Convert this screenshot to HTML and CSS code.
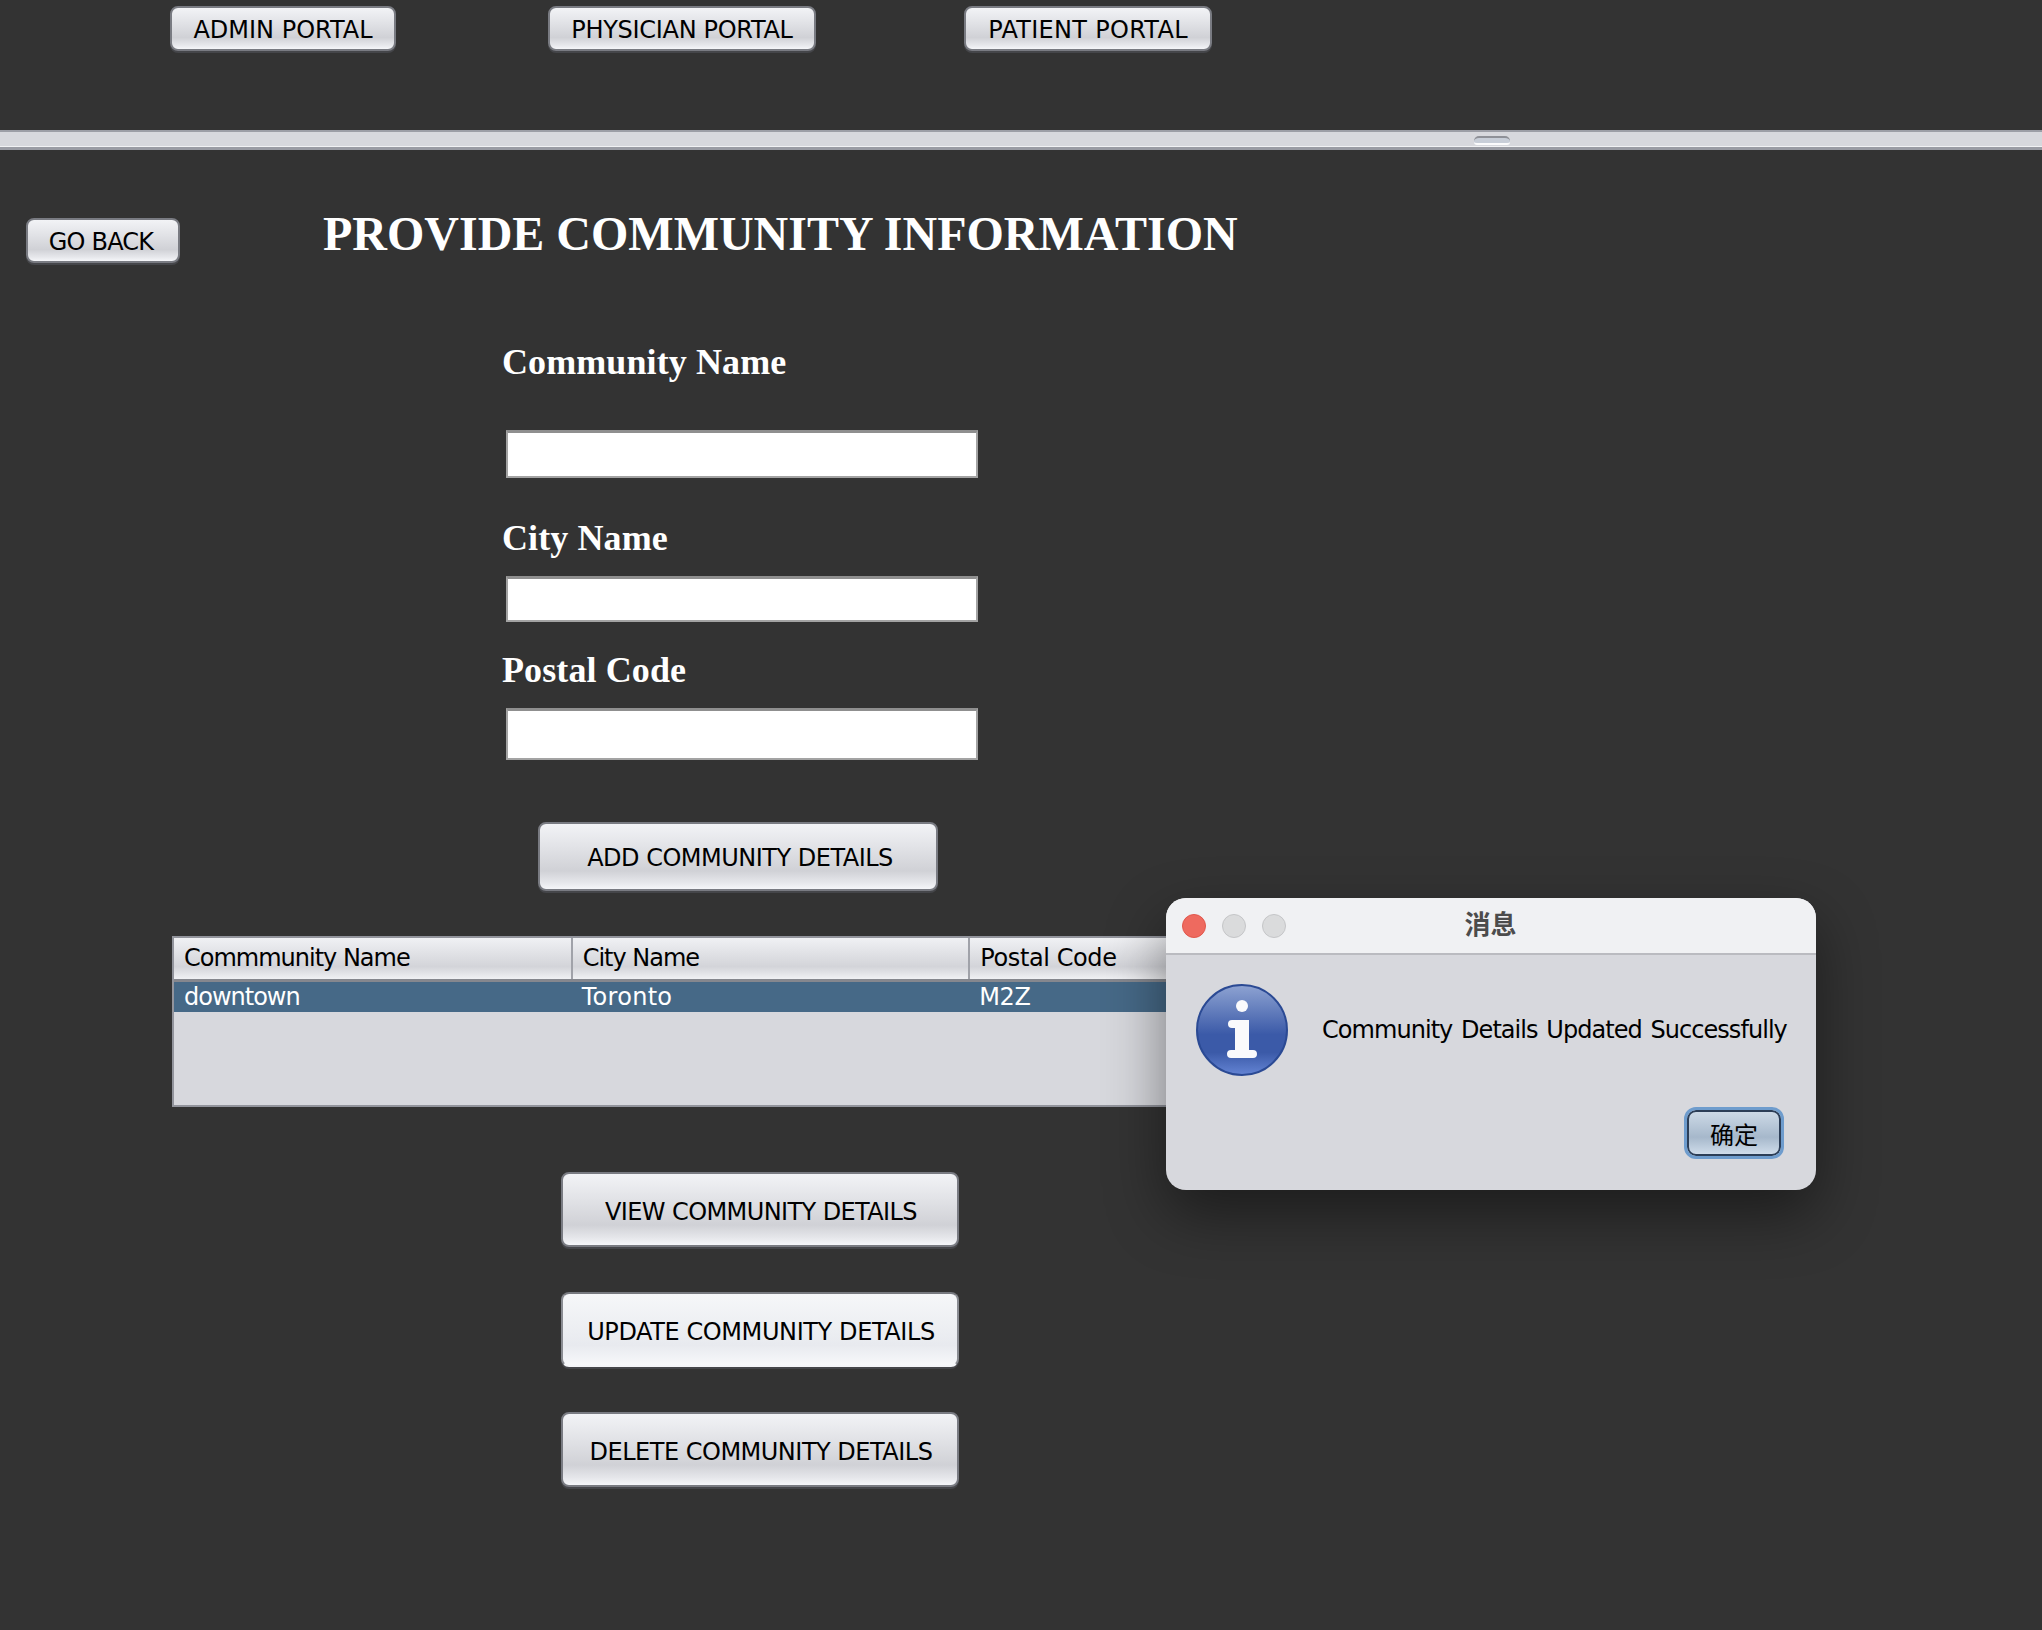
FILE: index.html
```html
<!DOCTYPE html>
<html lang="en">
<head>
    <meta charset="UTF-8">
    <meta name="viewport" content="width=device-width, initial-scale=1.0">
    <title>Community Information</title>
    <link rel="stylesheet" href="styles.css">
</head>
<body>
    <div class="portals">
        <button class="btn admin">ADMIN PORTAL</button>
        <button class="btn physician">PHYSICIAN PORTAL</button>
        <button class="btn patient">PATIENT PORTAL</button>
    </div>
    <div class="divider"><span class="grip"></span></div>
    <div class="work">
        <div class="head">
            <button class="btn back">GO BACK</button>
            <h1 class="title">PROVIDE COMMUNITY INFORMATION</h1>
        </div>
        <form class="fields">
            <label class="lbl lbl-community">Community Name</label>
            <input class="box box-community" type="text">
            <label class="lbl lbl-city">City Name</label>
            <input class="box box-city" type="text">
            <label class="lbl lbl-postal">Postal Code</label>
            <input class="box box-postal" type="text">
        </form>
        <button class="btn big add">ADD COMMUNITY DETAILS</button>
        <div class="grid-wrap">
            <table class="grid">
                <thead>
                    <tr><th>Commmunity Name</th><th>City Name</th><th class="loose">Postal Code</th></tr>
                </thead>
                <tbody>
                    <tr class="cur"><td>downtown</td><td class="wider">Toronto</td><td class="loose">M2Z</td></tr>
                </tbody>
            </table>
        </div>
        <div class="actions">
            <button class="btn wide view">VIEW COMMUNITY DETAILS</button>
            <button class="btn wide focus">UPDATE COMMUNITY DETAILS</button>
            <button class="btn wide delete">DELETE COMMUNITY DETAILS</button>
        </div>
    </div>

    <div class="dialog">
        <div class="titlebar">
            <span class="light red"></span>
            <span class="light"></span>
            <span class="light"></span>
            <span class="dialog-title">消息</span>
        </div>
        <div class="dialog-body">
            <svg class="info" width="92" height="92" viewBox="0 0 92 92">
                <defs>
                    <linearGradient id="orb" x1="0" y1="0" x2="0" y2="1">
                        <stop offset="0" stop-color="#8ea3d2"/>
                        <stop offset="0.55" stop-color="#3b5aa8"/>
                        <stop offset="0.75" stop-color="#3b5aa8"/>
                        <stop offset="1" stop-color="#6484d4"/>
                    </linearGradient>
                </defs>
                <circle cx="46" cy="46" r="45" fill="url(#orb)" stroke="#2b4a94" stroke-width="2"/>
                <circle cx="46" cy="22" r="6" fill="#fafafc"/>
                <path d="M36 36 H53 V66 H57 a4 4 0 0 1 0 8 H35 a4 4 0 0 1 0 -8 H39 V44 H36 a4 4 0 0 1 0 -8 Z" fill="#fafafc"/>
            </svg>
            <p class="msg">Community Details Updated Successfully</p>
        </div>
        <div class="dialog-foot">
            <button class="ok">确定</button>
        </div>
    </div>
</body>
</html>
```
FILE: styles.css
```css
*{
    padding: 0;
    margin: 0;
    box-sizing: border-box;
}
html,body{
    height: 100%;
    overflow: hidden;
}
body{
    background-color: #333333;
    font-family: "DejaVu Sans", "Noto Sans CJK SC", sans-serif;
    color: #000;
}
.btn{
    display: block;
    height: 45px;
    padding-top: 2px;
    border: 2px solid #797b82;
    border-radius: 8px;
    background: linear-gradient(#f2f3f6 0%, #e2e3e7 35%, #d0d1d6 72%, #e6e7eb 90%, #f5f6f9 100%);
    box-shadow: 0 2px 0 #45464a;
    font-family: "DejaVu Sans", sans-serif;
    font-size: 24px;
    letter-spacing: -0.4px;
    color: #000;
}
/* top bar */
.portals{
    display: flex;
    height: 130px;
    padding: 6px 0 0 170px;
}
.admin{
    width: 226px;
    letter-spacing: 0;
}
.physician{
    width: 268px;
    margin-left: 152px;
    letter-spacing: -0.3px;
}
.patient{
    width: 248px;
    margin-left: 148px;
    letter-spacing: 0.3px;
}
.divider{
    position: relative;
    height: 20px;
    background-color: #d7d8dd;
    border-top: 2px solid #9c9ea6;
    border-bottom: 3px solid #9a9ca4;
    box-shadow: inset 0 -1px 0 #f1f2f4;
}
.grip{
    position: absolute;
    left: 1474px;
    top: 4px;
    width: 36px;
    height: 9px;
    border-radius: 5px 5px 3px 3px;
    border-top: 2px solid #8e9097;
    border-bottom: 2px solid #fbfbfc;
    background-color: #c8ced8;
}
/* main area */
.head{
    display: flex;
    height: 191px;
    padding: 68px 0 0 26px;
}
.back{
    width: 154px;
    padding-right: 4px;
    letter-spacing: -0.8px;
}
.title{
    margin: -12px 0 0 143px;
    font-family: "Liberation Serif", serif;
    font-size: 48px;
    line-height: 56px;
    color: #fff;
}
.fields{
    display: flex;
    flex-direction: column;
    align-items: flex-start;
    padding-left: 502px;
}
.lbl{
    height: 42px;
    font-family: "Liberation Serif", serif;
    font-weight: bold;
    font-size: 36px;
    line-height: 42px;
    letter-spacing: 0.1px;
    color: #fff;
}
.lbl-city{
    margin-top: 39px;
}
.lbl-postal{
    margin-top: 27px;
}
.box{
    width: 472px;
    margin-left: 4px;
    border: 2px solid #a3a3a3;
    border-top: 3px solid #8f8f8f;
    background-color: #fff;
}
.box-community{
    height: 48px;
    margin-top: 47px;
}
.box-city{
    height: 46px;
    margin-top: 17px;
}
.box-postal{
    height: 52px;
    margin-top: 17px;
}
.add{
    width: 400px;
    height: 69px;
    margin: 62px 0 0 538px;
    padding-left: 4px;
    letter-spacing: -0.5px;
}
.grid-wrap{
    width: 1198px;
    height: 171px;
    margin: 45px 0 0 172px;
    border: 2px solid #92949c;
    background-color: #d7d8dd;
}
.grid{
    width: 100%;
    table-layout: fixed;
    border-collapse: collapse;
    font-size: 24px;
    letter-spacing: -1px;
}
.grid th{
    height: 42px;
    padding-left: 10px;
    border-right: 2px solid #a0a2a9;
    border-bottom: 3px solid #85878e;
    background: linear-gradient(#f0f1f4 0%, #d3d4d9 70%, #f0f1f4 100%);
    font-weight: normal;
    text-align: left;
}
.grid td{
    height: 32px;
    padding-left: 10px;
    color: #fff;
    background-color: #466987;
}
.grid .loose{
    letter-spacing: -0.4px;
}
.grid .wider{
    letter-spacing: 0.3px;
}
.actions{
    display: flex;
    flex-direction: column;
    gap: 45px;
    margin: 65px 0 0 561px;
}
.wide{
    width: 398px;
    height: 75px;
    padding: 4px 0 0 2px;
}
.view{
    letter-spacing: -0.6px;
}
.delete{
    letter-spacing: -0.5px;
}
.focus{
    border-color: #77797f #8a8c92 #f4f5f8;
    background: linear-gradient(#f6f7f9 0%, #eef0f3 40%, #e8eaef 72%, #f7f8fa 100%);
}
/* message dialog */
.dialog{
    position: absolute;
    left: 1166px;
    top: 898px;
    width: 650px;
    height: 292px;
    border-radius: 20px;
    background-color: #d7d8dd;
    box-shadow: 0 24px 60px rgba(0, 0, 0, 0.45);
    overflow: hidden;
}
.titlebar{
    position: relative;
    display: flex;
    align-items: center;
    gap: 16px;
    height: 57px;
    padding: 0 0 0 16px;
    background-color: #f0f1f3;
    border-bottom: 2px solid #babbc0;
}
.light{
    width: 24px;
    height: 24px;
    border-radius: 50%;
    background-color: #dadbdc;
    border: 1px solid #c4c5c7;
}
.red{
    background-color: #ee6a5f;
    border-color: #e0574c;
}
.dialog-title{
    position: absolute;
    left: -1px;
    right: 0;
    top: 6px;
    text-align: center;
    font-family: "Noto Sans CJK SC", sans-serif;
    font-weight: bold;
    font-size: 26px;
    color: #4c4c4c;
}
.dialog-body{
    display: flex;
    align-items: center;
    height: 92px;
    margin-top: 29px;
    padding-left: 30px;
}
.msg{
    margin-left: 34px;
    font-size: 24px;
    letter-spacing: -0.95px;
    word-spacing: 2px;
    white-space: nowrap;
}
.dialog-foot{
    display: flex;
    justify-content: flex-end;
    margin-top: 34px;
    padding-right: 35px;
}
.ok{
    width: 94px;
    height: 46px;
    border: 2px solid #2c3e57;
    border-radius: 9px;
    outline: 3px solid #6e9ccd;
    outline-offset: 0;
    background: linear-gradient(#ccd9e6 0%, #a6b8cb 60%, #cfdcea 100%);
    font-family: "Noto Sans CJK SC", sans-serif;
    font-size: 24px;
    color: #000;
}
```
